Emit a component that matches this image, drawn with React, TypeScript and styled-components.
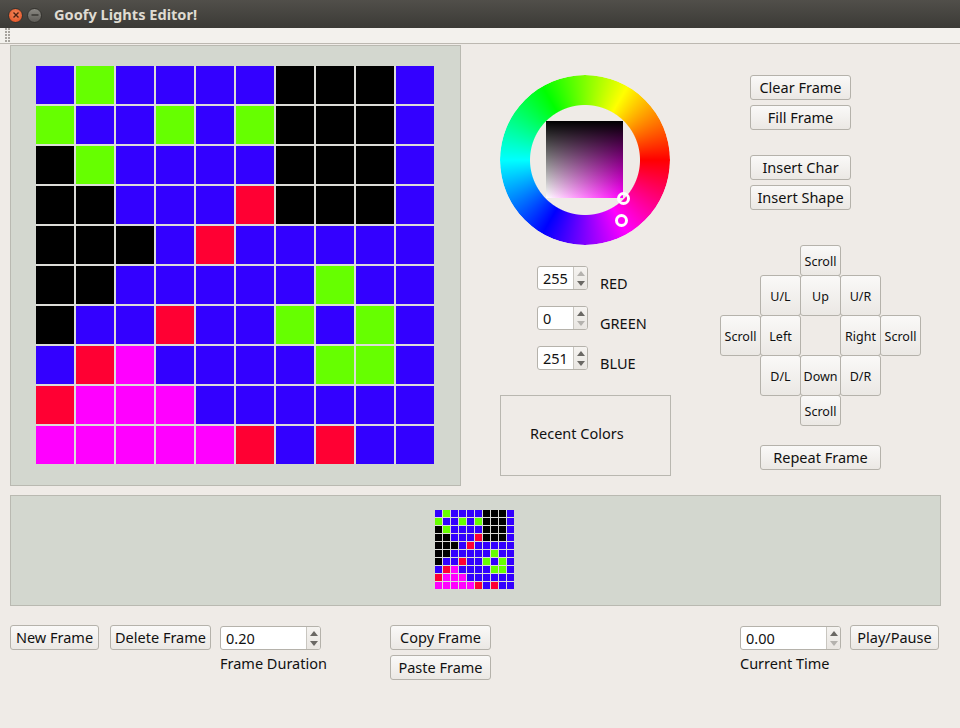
import React from "react";
import styled, { createGlobalStyle } from "styled-components";

const FRAME = [
  "BGBBBBKKKB",
  "GBBGBGKKKB",
  "KGBBBBKKKB",
  "KKBBBRKKKB",
  "KKKBRBBBBB",
  "KKBBBBBGBB",
  "KBBRBBGBGB",
  "BRMBBBBGGB",
  "RMMMBBBBBB",
  "MMMMMRBRBB",
];

const COLORS: Record<string, string> = {
  B: "#3300ff",
  G: "#66ff00",
  K: "#000000",
  R: "#ff0033",
  M: "#ff00ff",
};

const GlobalStyle = createGlobalStyle`
  html, body {
    margin: 0;
    padding: 0;
    background: #efebe7;
  }
  * {
    box-sizing: border-box;
  }
  body {
    font-family: "Noto Sans", "Open Sans", sans-serif;
    font-size: 14.5px;
    color: #111;
  }
`;

const Window = styled.div`
  width: 960px;
  height: 728px;
  overflow: hidden;
  background: #efebe7;
`;

const TitleBar = styled.div`
  height: 28px;
  display: flex;
  align-items: center;
  padding: 2px 0 0 8px;
  background: linear-gradient(#514f4a, #3b3a36);
`;

const WindowButton = styled.div<{ $close?: boolean }>`
  width: 15px;
  height: 15px;
  margin-right: 4px;
  border-radius: 50%;
  display: flex;
  align-items: center;
  justify-content: center;
  border: 1px solid #34332f;
  background: ${(p) =>
    p.$close
      ? "radial-gradient(circle at 50% 40%, #f58a5c, #e0491c)"
      : "linear-gradient(#8a8882, #5f5d58)"};
`;

const Title = styled.div`
  margin: -2px 0 0 8px;
  font-size: 14.6px;
  font-weight: 700;
  color: #dfdbd2;
`;

const ToolBar = styled.div`
  height: 16px;
  padding-left: 5px;
  background: #f3f1ed;
  border-bottom: 1px solid #bcb8b1;
`;

const Grip = styled.div`
  width: 5px;
  height: 15px;
  background-image: radial-gradient(circle at 1px 1px, #a8a59f 1px, transparent 1px);
  background-size: 3px 3px;
`;

const Content = styled.div`
  padding: 1px 0 0 10px;
`;

const TopRow = styled.div`
  display: flex;
  align-items: flex-start;
`;

const EditorPanel = styled.div`
  width: 451px;
  height: 441px;
  padding: 20px 0 0 25px;
  background: #d3d7cf;
  border: 1px solid #b9b9b1;
`;

const PixelGrid = styled.div<{ $cell: number; $gap: number }>`
  display: grid;
  width: max-content;
  height: max-content;
  grid-template-columns: repeat(10, ${(p) => p.$cell}px);
  grid-auto-rows: ${(p) => p.$cell}px;
  gap: ${(p) => p.$gap}px;
  background: #dcdcd8;
`;

const Pixel = styled.div<{ $color: string }>`
  background: ${(p) => p.$color};
`;

const ColorColumn = styled.div`
  width: 171px;
  margin-left: 39px;
  padding-top: 30px;
`;

const Wheel = styled.div`
  position: relative;
  width: 170px;
  height: 170px;
  display: flex;
  align-items: center;
  justify-content: center;
`;

const HueRing = styled.div`
  position: absolute;
  inset: 0;
  border-radius: 50%;
  background: conic-gradient(from 90deg, #f00, #f0f, #00f, #0ff, #0f0, #ff0, #f00);
  mask: radial-gradient(circle, transparent 54.5px, #000 55.5px);
`;

const ShadeSquare = styled.div`
  width: 77px;
  height: 77px;
  margin: -2px 0 0 -1px;
  background: linear-gradient(#000, transparent), linear-gradient(to right, #fff, #ff00fb);
`;

const Handle = styled.div<{ $x: number; $y: number }>`
  position: absolute;
  left: ${(p) => p.$x}px;
  top: ${(p) => p.$y}px;
  width: 13px;
  height: 13px;
  border: 3px solid #fff;
  border-radius: 50%;
`;

const ChannelList = styled.div`
  display: flex;
  flex-direction: column;
  gap: 16px;
  margin: 21px 0 25px 37px;
`;

const ChannelRow = styled.div`
  display: flex;
  align-items: flex-start;
  height: 24px;
`;

const ChannelLabel = styled.div`
  margin: 7px 0 0 12px;
  line-height: 20px;
`;

const SpinBox = styled.div<{ $width: number }>`
  width: ${(p) => p.$width}px;
  height: 24px;
  display: flex;
  background: #fff;
  border: 1px solid #b5b2ab;
  border-radius: 3px;
`;

const SpinValue = styled.div`
  flex: 1;
  padding-left: 5px;
  line-height: 23px;
`;

const SpinArrows = styled.div`
  width: 14px;
  display: flex;
  flex-direction: column;
  align-items: center;
  justify-content: center;
  gap: 5px;
  background: linear-gradient(#f5f3f0, #e9e6e2);
  border-left: 1px solid #c9c6c0;
  border-radius: 0 2px 2px 0;
`;

const Arrow = styled.div<{ $down?: boolean; $off?: boolean }>`
  width: 0;
  height: 0;
  border-left: 4px solid transparent;
  border-right: 4px solid transparent;
  ${(p) => (p.$down ? "border-top" : "border-bottom")}: 5px solid ${(p) =>
    p.$off ? "#b4b2ae" : "#6a6864"};
`;

const RecentColors = styled.div`
  height: 81px;
  padding: 27px 0 0 29px;
  line-height: 20px;
  border: 1px solid #b9b7b0;
`;

const ActionColumn = styled.div`
  width: 201px;
  margin-left: 49px;
  padding-top: 30px;
`;

const ButtonStack = styled.div<{ $after?: number; $indent?: number }>`
  display: flex;
  flex-direction: column;
  gap: 5px;
  margin-left: ${(p) => p.$indent ?? 0}px;
  margin-bottom: ${(p) => p.$after ?? 0}px;
`;

const Button = styled.button<{ $width?: number; $left?: number }>`
  width: ${(p) => (p.$width ? `${p.$width}px` : "auto")};
  height: 25px;
  margin-left: ${(p) => p.$left ?? 0}px;
  padding: 0 0 2px;
  flex: none;
  font-family: inherit;
  font-size: 14.5px;
  color: #111;
  background: linear-gradient(#faf9f8, #ebe8e4);
  border: 1px solid #b5b2ab;
  border-radius: 3px;
`;

const DirectionPad = styled.div`
  display: grid;
  grid-template-columns: repeat(5, 40px);
  grid-template-rows: 30px 40px 40px 40px 30px;
  margin-bottom: 20px;
`;

const PadButton = styled.button<{ $col: number; $row: number }>`
  grid-column: ${(p) => p.$col};
  grid-row: ${(p) => p.$row};
  width: 41px;
  height: calc(100% + 1px);
  padding: 1px 0 0;
  font-family: inherit;
  font-size: 12.5px;
  color: #111;
  background: linear-gradient(#faf9f8, #ebe8e4);
  border: 1px solid #b5b2ab;
  border-radius: 3px;
`;

const StripPanel = styled.div`
  width: 931px;
  height: 111px;
  margin-top: 9px;
  padding: 14px 2px 0 0;
  display: flex;
  justify-content: center;
  background: #d3d7cf;
  border: 1px solid #b9b9b1;
`;

const BottomRow = styled.div`
  display: flex;
  align-items: flex-start;
  margin-top: 19px;
`;

const SpinField = styled.div<{ $left: number }>`
  width: 101px;
  margin-left: ${(p) => p.$left}px;
  padding-top: 1px;
`;

const FieldLabel = styled.div`
  margin-top: 3px;
  line-height: 20px;
  white-space: nowrap;
`;

const Spin = ({
  value,
  width = 51,
  upOff,
  downOff,
}: {
  value: string;
  width?: number;
  upOff?: boolean;
  downOff?: boolean;
}) => (
  <SpinBox $width={width}>
    <SpinValue>{value}</SpinValue>
    <SpinArrows>
      <Arrow $off={upOff} />
      <Arrow $down $off={downOff} />
    </SpinArrows>
  </SpinBox>
);

const Frame = ({ cell, gap }: { cell: number; gap: number }) => (
  <PixelGrid $cell={cell} $gap={gap}>
    {FRAME.join("")
      .split("")
      .map((c, i) => (
        <Pixel key={i} $color={COLORS[c]} />
      ))}
  </PixelGrid>
);

const PAD: [string, number, number][] = [
  ["Scroll", 3, 1],
  ["U/L", 2, 2],
  ["Up", 3, 2],
  ["U/R", 4, 2],
  ["Scroll", 1, 3],
  ["Left", 2, 3],
  ["Right", 4, 3],
  ["Scroll", 5, 3],
  ["D/L", 2, 4],
  ["Down", 3, 4],
  ["D/R", 4, 4],
  ["Scroll", 3, 5],
];

export default function App() {
  return (
    <Window>
      <GlobalStyle />
      <TitleBar>
        <WindowButton $close>
          <svg width="8" height="8" viewBox="0 0 8 8">
            <path d="M1.5 1.5l5 5M6.5 1.5l-5 5" stroke="#4a2012" strokeWidth="1.4" />
          </svg>
        </WindowButton>
        <WindowButton>
          <svg width="8" height="8" viewBox="0 0 8 8">
            <path d="M0.5 4h7" stroke="#35342f" strokeWidth="1.4" />
          </svg>
        </WindowButton>
        <Title>Goofy Lights Editor!</Title>
      </TitleBar>
      <ToolBar>
        <Grip />
      </ToolBar>
      <Content>
        <TopRow>
          <EditorPanel>
            <Frame cell={38} gap={2} />
          </EditorPanel>
          <ColorColumn>
            <Wheel>
              <HueRing />
              <ShadeSquare />
              <Handle $x={117} $y={117} />
              <Handle $x={115} $y={139} />
            </Wheel>
            <ChannelList>
              <ChannelRow>
                <Spin value="255" upOff />
                <ChannelLabel>RED</ChannelLabel>
              </ChannelRow>
              <ChannelRow>
                <Spin value="0" downOff />
                <ChannelLabel>GREEN</ChannelLabel>
              </ChannelRow>
              <ChannelRow>
                <Spin value="251" />
                <ChannelLabel>BLUE</ChannelLabel>
              </ChannelRow>
            </ChannelList>
            <RecentColors>Recent Colors</RecentColors>
          </ColorColumn>
          <ActionColumn>
            <ButtonStack $indent={30} $after={25}>
              <Button $width={101}>Clear Frame</Button>
              <Button $width={101}>Fill Frame</Button>
            </ButtonStack>
            <ButtonStack $indent={30} $after={35}>
              <Button $width={101}>Insert Char</Button>
              <Button $width={101}>Insert Shape</Button>
            </ButtonStack>
            <DirectionPad>
              {PAD.map(([label, col, row]) => (
                <PadButton key={`${col}-${row}`} $col={col} $row={row}>
                  {label}
                </PadButton>
              ))}
            </DirectionPad>
            <ButtonStack $indent={40}>
              <Button $width={121}>Repeat Frame</Button>
            </ButtonStack>
          </ActionColumn>
        </TopRow>
        <StripPanel>
          <Frame cell={7} gap={1} />
        </StripPanel>
        <BottomRow>
          <Button $width={89}>New Frame</Button>
          <Button $width={101} $left={11}>
            Delete Frame
          </Button>
          <SpinField $left={9}>
            <Spin value="0.20" width={101} />
            <FieldLabel>Frame Duration</FieldLabel>
          </SpinField>
          <ButtonStack $indent={69}>
            <Button $width={101}>Copy Frame</Button>
            <Button $width={101}>Paste Frame</Button>
          </ButtonStack>
          <SpinField $left={249}>
            <Spin value="0.00" width={101} downOff />
            <FieldLabel>Current Time</FieldLabel>
          </SpinField>
          <Button $width={89} $left={9}>
            Play/Pause
          </Button>
        </BottomRow>
      </Content>
    </Window>
  );
}
